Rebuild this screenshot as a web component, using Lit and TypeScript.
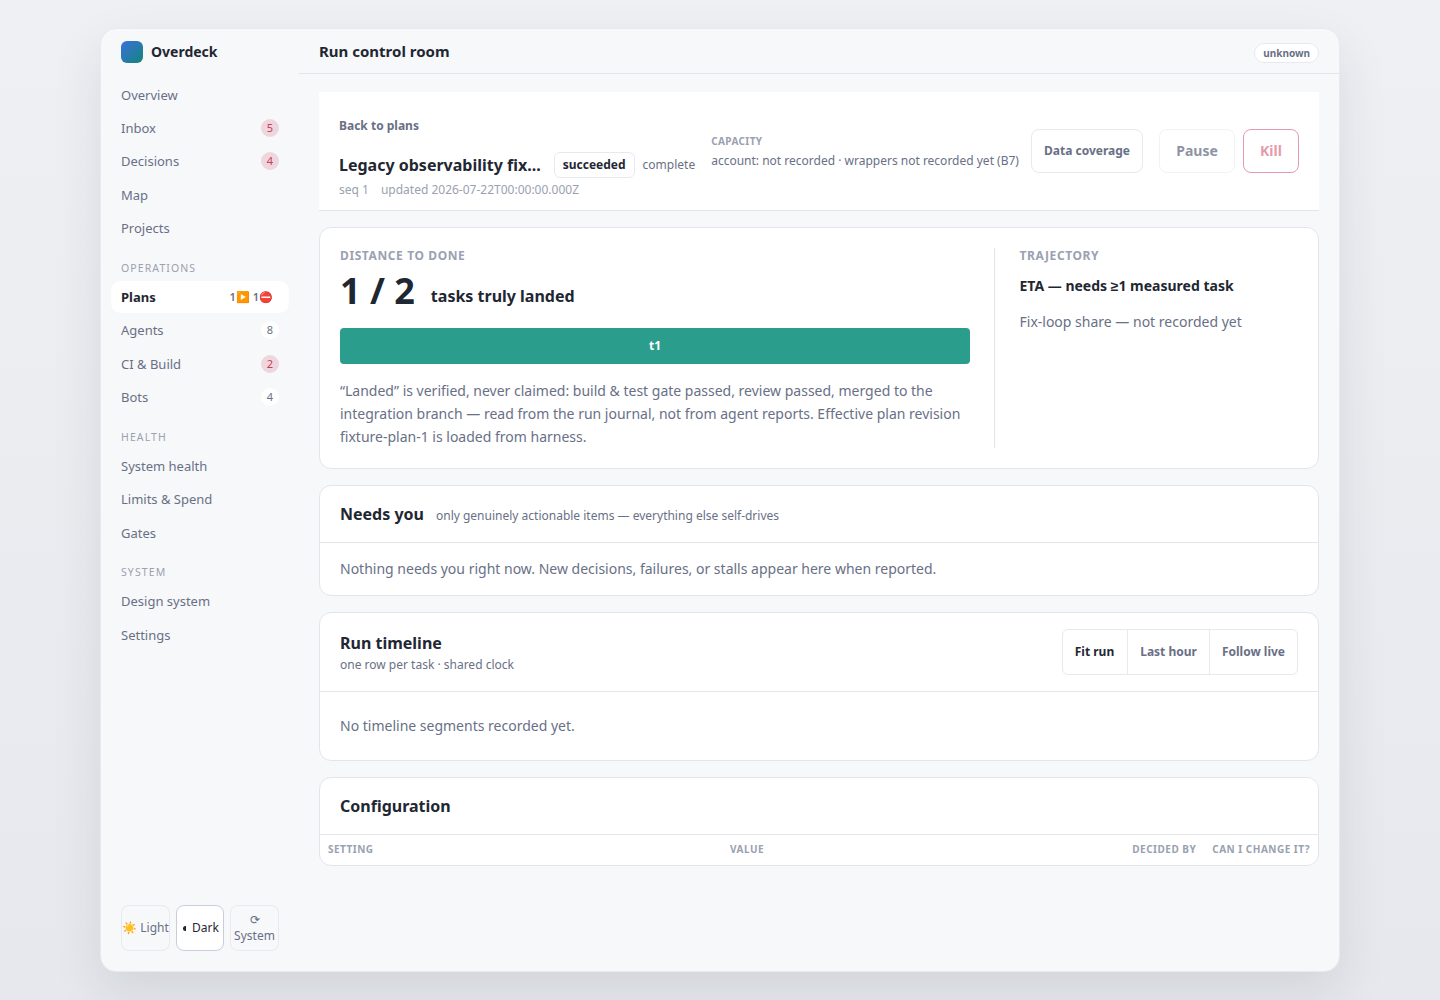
import {LitElement, html, css} from 'lit';
import {customElement} from 'lit/decorators.js';

type NavItem = {label: string; badge?: string; danger?: boolean};

const GROUPS: {title?: string; items: NavItem[]}[] = [
  {items: [
    {label: 'Overview'},
    {label: 'Inbox', badge: '5', danger: true},
    {label: 'Decisions', badge: '4', danger: true},
    {label: 'Map'},
    {label: 'Projects'},
  ]},
  {title: 'OPERATIONS', items: [
    {label: 'Plans'},
    {label: 'Agents', badge: '8'},
    {label: 'CI & Build', badge: '2', danger: true},
    {label: 'Bots', badge: '4'},
  ]},
  {title: 'HEALTH', items: [
    {label: 'System health'},
    {label: 'Limits & Spend'},
    {label: 'Gates'},
  ]},
  {title: 'SYSTEM', items: [
    {label: 'Design system'},
    {label: 'Settings'},
  ]},
];

@customElement('app-root')
export class AppRoot extends LitElement {
  static styles = css`
    :host {
      display: block;
      height: 1000px;
      box-sizing: border-box;
      padding: 28px 100px;
      background: linear-gradient(180deg, #eef0f4 0%, #e6e8ed 100%);
      font-family: "Noto Sans", sans-serif;
      color: #1f2733;
    }
    * { box-sizing: border-box; }
    .shell {
      display: flex;
      height: 944px;
      border: 1px solid #e7e9ef;
      border-radius: 16px;
      background: #f7f8fa;
      box-shadow: 0 20px 50px rgba(31, 39, 51, .10);
      overflow: hidden;
    }
    .side {
      width: 198px;
      flex: none;
      display: flex;
      flex-direction: column;
      padding: 0 10px 20px;
    }
    .brand {
      display: flex;
      align-items: center;
      gap: 8px;
      height: 45px;
      padding: 0 10px;
      margin-bottom: 4.85px;
      font-size: 14px;
      font-weight: 700;
    }
    .logo {
      width: 22px;
      height: 22px;
      border-radius: 6px;
      background: linear-gradient(135deg, #3b6fe0, #14857a);
    }
    .group-title {
      font-size: 10.5px;
      letter-spacing: 1.1px;
      color: #9aa1b1;
      padding: 0 10px;
      height: 16px;
      line-height: 16px;
      margin: 13.65px 0 5.5px;
    }
    .nav {
      display: flex;
      align-items: center;
      justify-content: space-between;
      height: 31.45px;
      margin-bottom: 2px;
      padding: 0 10px;
      border-radius: 10px;
      font-size: 13px;
      color: #697086;
    }
    .nav.active {
      background: #fff;
      color: #1f2733;
      font-weight: 700;
    }
    .badge {
      width: 18px;
      height: 18px;
      border-radius: 50%;
      background: #fff;
      font-size: 11px;
      line-height: 18px;
      text-align: center;
      color: #697086;
    }
    .badge.danger { background: #eed6dc; color: #c2405e; }
    .plan-badges {
      font-size: 11px;
      font-weight: 600;
      color: #697086;
      margin-right: 6px;
      white-space: nowrap;
    }
    .themes {
      margin-top: auto;
      display: flex;
      gap: 6px;
      padding: 0 10px;
    }
    .theme {
      height: 46px;
      border: 1px solid #e7e9ef;
      border-radius: 8px;
      display: flex;
      align-items: center;
      justify-content: center;
      text-align: center;
      font-size: 12px;
      line-height: 16px;
      color: #697086;
    }
    .theme.on { background: #fff; border-color: #c9ccdb; color: #1f2733; }
    .moon {
      flex: none;
      width: 3px;
      height: 5px;
      margin: 0 6px 0 2px;
      border-radius: 3px 0 0 3px;
      background: #1f2733;
    }
    .main { flex: 1; min-width: 0; display: flex; flex-direction: column; }
    .top {
      height: 45px;
      flex: none;
      display: flex;
      align-items: center;
      justify-content: space-between;
      padding: 0 20px;
      border-bottom: 1px solid #e3e5eb;
      font-size: 15px;
      font-weight: 700;
    }
    .pill {
      height: 20px;
      align-self: flex-end;
      margin-bottom: 10px;
      padding: 0 8px;
      border: 1px solid #e7e9ef;
      border-radius: 10px;
      background: #fff;
      font-size: 10px;
      line-height: 18px;
      font-weight: 700;
      color: #697086;
    }
    .content {
      padding: 18px 20px;
      display: flex;
      flex-direction: column;
      gap: 16px;
    }
    .hero {
      height: 119px;
      background: #fff;
      border-bottom: 1px solid #e3e5eb;
      display: flex;
      align-items: center;
      padding: 0 20px;
    }
    .hero-left { flex: none; margin-top: 13px; }
    .back { font-size: 12px; font-weight: 700; color: #697086; margin-bottom: 18px; line-height: 16px; }
    .title-row { display: flex; align-items: center; gap: 8px; }
    .title { font-size: 16px; font-weight: 700; line-height: 22px; margin-right: 5px; }
    .status {
      height: 26px;
      padding: 0 8px;
      border: 1px solid #e7e9ef;
      border-radius: 6px;
      font-size: 12px;
      font-weight: 700;
      line-height: 24px;
    }
    .sub { font-size: 12px; color: #697086; }
    .meta { display: flex; gap: 12px; font-size: 12px; color: #9aa1b1; line-height: 16px; margin-top: 4px; }
    .capacity { margin-left: 16px; white-space: nowrap; }
    .cap-label { font-size: 10px; font-weight: 700; letter-spacing: .4px; color: #9aa1b1; line-height: 14px; margin-bottom: 4px; }
    .actions { margin-left: auto; flex: none; display: flex; gap: 8px; }
    .btn {
      width: 112px;
      height: 44px;
      border: 1px solid #e7e9ef;
      border-radius: 8px;
      background: #fff;
      font-size: 12px;
      font-weight: 700;
      line-height: 42px;
      text-align: center;
      color: #697086;
      white-space: nowrap;
    }
    .btn.pause { width: 76px; margin-left: 8px; font-size: 14px; opacity: .75; color: #697086; border-color: #eceef2; }
    .btn.kill { width: 56px; font-size: 14px; color: #e59aac; border-color: #e59aac; }
    .card {
      background: #fff;
      border: 1px solid #e3e5eb;
      border-radius: 12px;
    }
    .distance {
      height: 242px;
      padding: 20px;
      display: flex;
    }
    .dist-left { width: 655px; padding-right: 24px; border-right: 1px solid #e3e5eb; }
    .dist-right { padding-left: 24.5px; }
    .eyebrow { font-size: 12px; font-weight: 700; letter-spacing: .6px; color: #9aa1b1; line-height: 16px; }
    .score { display: flex; align-items: center; gap: 16px; margin-top: 2px; }
    .big { font-size: 36px; font-weight: 700; line-height: 50px; }
    .score-label { font-size: 16px; font-weight: 700; margin-top: 10px; }
    .bar {
      height: 36px;
      margin-top: 12px;
      background: #2a9d8c;
      border-radius: 4px;
      color: #fff;
      font-size: 12px;
      font-weight: 700;
      line-height: 36px;
      text-align: center;
    }
    .para { font-size: 14px; line-height: 23px; color: #697086; margin: 15px 0 0; }
    .eta { font-size: 14px; font-weight: 700; line-height: 20px; margin-top: 12px; }
    .fix { font-size: 14px; color: #697086; line-height: 20px; margin-top: 16px; }
    .head { display: flex; align-items: baseline; gap: 12px; padding: 16px 20px; border-bottom: 1px solid #e3e5eb; height: 57px; }
    .h { font-size: 16px; font-weight: 700; line-height: 24px; }
    .head .sub { font-size: 12px; }
    .empty { font-size: 14px; color: #697086; padding: 16px 20px; line-height: 20px; }
    .tl-head {
      display: flex;
      align-items: center;
      justify-content: space-between;
      height: 79px;
      padding: 0 20px;
      border-bottom: 1px solid #e3e5eb;
    }
    .tl-sub { font-size: 12px; color: #697086; line-height: 16px; margin-top: 2px; }
    .seg { display: flex; height: 46px; border: 1px solid #e7e9ef; border-radius: 6px; }
    .seg span {
      padding: 0 12px;
      font-size: 12px;
      font-weight: 700;
      line-height: 44px;
      color: #697086;
      border-left: 1px solid #e7e9ef;
    }
    .seg span:first-child { border-left: 0; color: #1f2733; padding-right: 13px; }
    .tl-empty { padding: 24px 20px; }
    .cfg-head { height: 57px; padding: 16px 20px; border-bottom: 1px solid #e3e5eb; }
    .cols {
      display: grid;
      grid-template-columns: 402px 1fr auto auto;
      padding: 0 8px 2px;
      height: 30px;
      align-items: center;
      font-size: 10px;
      font-weight: 700;
      letter-spacing: .5px;
      color: #9aa1b1;
    }
    .cols .r { padding-right: 16px; }
  `;

  renderNav(item: NavItem) {
    const active = item.label === 'Plans';
    return html`<div class="nav ${active ? 'active' : ''}">
      <span>${item.label}</span>
      ${active ? html`<span class="plan-badges">1▶️ 1⛔</span>` : ''}
      ${item.badge ? html`<span class="badge ${item.danger ? 'danger' : ''}">${item.badge}</span>` : ''}
    </div>`;
  }

  render() {
    return html`<div class="shell">
      <aside class="side">
        <div class="brand"><div class="logo"></div>Overdeck</div>
        ${GROUPS.map((g) => html`
          ${g.title ? html`<div class="group-title">${g.title}</div>` : ''}
          ${g.items.map((i) => this.renderNav(i))}
        `)}
        <div class="themes">
          <div class="theme" style="width:49px">☀️ Light</div>
          <div class="theme on" style="width:48px"><span class="moon"></span>Dark</div>
          <div class="theme" style="width:49px">⟳<br />System</div>
        </div>
      </aside>
      <main class="main">
        <div class="top"><span>Run control room</span><span class="pill">unknown</span></div>
        <div class="content">
          <section class="hero">
            <div class="hero-left">
              <div class="back">Back to plans</div>
              <div class="title-row">
                <span class="title">Legacy observability fix...</span>
                <span class="status">succeeded</span>
                <span class="sub">complete</span>
              </div>
              <div class="meta"><span>seq 1</span><span>updated 2026-07-22T00:00:00.000Z</span></div>
            </div>
            <div class="capacity">
              <div class="cap-label">CAPACITY</div>
              <div class="sub">account: not recorded · wrappers not recorded yet (B7)</div>
            </div>
            <div class="actions">
              <div class="btn">Data coverage</div>
              <div class="btn pause">Pause</div>
              <div class="btn kill">Kill</div>
            </div>
          </section>
          <section class="card distance">
            <div class="dist-left">
              <div class="eyebrow">DISTANCE TO DONE</div>
              <div class="score"><span class="big">1 / 2</span><span class="score-label">tasks truly landed</span></div>
              <div class="bar">t1</div>
              <p class="para">“Landed” is verified, never claimed: build &amp; test gate passed, review passed, merged to the integration branch — read from the run journal, not from agent reports. Effective plan revision fixture-plan-1 is loaded from harness.</p>
            </div>
            <div class="dist-right">
              <div class="eyebrow">TRAJECTORY</div>
              <div class="eta">ETA — needs ≥1 measured task</div>
              <div class="fix">Fix-loop share — not recorded yet</div>
            </div>
          </section>
          <section class="card">
            <div class="head"><span class="h">Needs you</span><span class="sub">only genuinely actionable items — everything else self-drives</span></div>
            <div class="empty">Nothing needs you right now. New decisions, failures, or stalls appear here when reported.</div>
          </section>
          <section class="card">
            <div class="tl-head">
              <div>
                <div class="h">Run timeline</div>
                <div class="tl-sub">one row per task · shared clock</div>
              </div>
              <div class="seg"><span>Fit run</span><span>Last hour</span><span>Follow live</span></div>
            </div>
            <div class="empty tl-empty">No timeline segments recorded yet.</div>
          </section>
          <section class="card">
            <div class="cfg-head"><div class="h">Configuration</div></div>
            <div class="cols"><span>SETTING</span><span>VALUE</span><span class="r">DECIDED BY</span><span>CAN I CHANGE IT?</span></div>
          </section>
        </div>
      </main>
    </div>`;
  }
}
